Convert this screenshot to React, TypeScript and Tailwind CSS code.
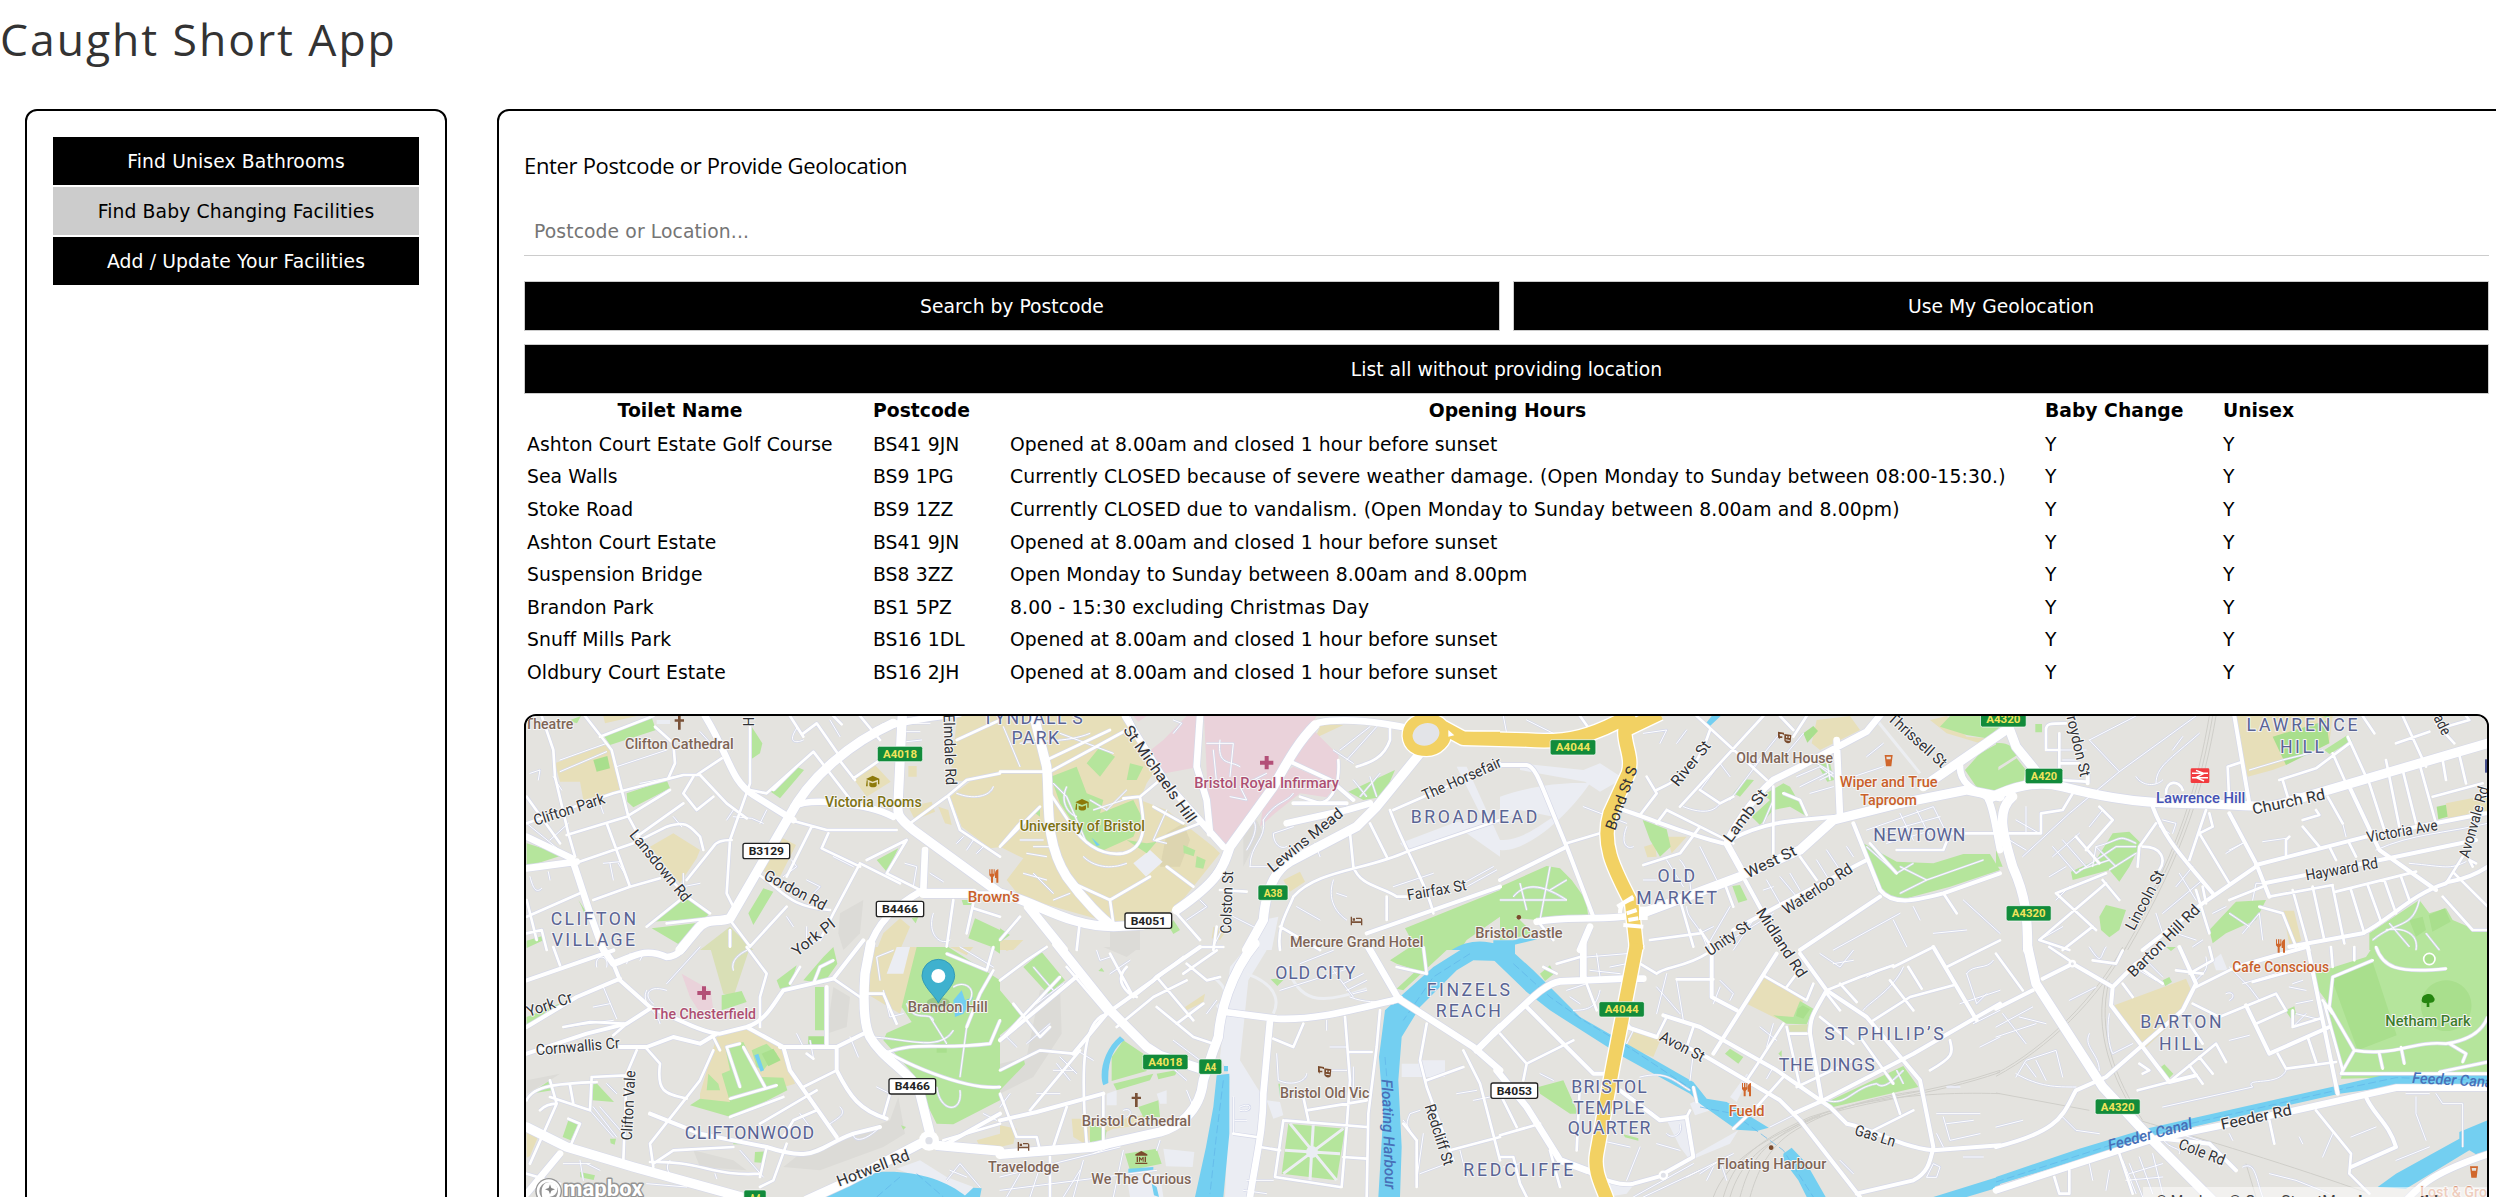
import React from "react";

type Tile = "A" | "B" | "C" | "D" | "E" | "F" | "G" | "H";
type Paths = Partial<Record<Tile, string>>;

// Map sections; geometry inside each is stored at three units per pixel.
const TILES: Record<Tile, [number, number]> = {
  A: [500, 700], B: [1000, 700], C: [1500, 700], D: [1996, 700],
  E: [500, 947], F: [1000, 947], G: [1500, 947], H: [1996, 947],
};
const KEYS = Object.keys(TILES) as Tile[];
const tf = (t: Tile) => `translate(${TILES[t][0]} ${TILES[t][1]}) scale(0.333333)`;

const FILLS: { c: string; p: Paths }[] = [
  { c: "#dcdbd7", p: {
    A: "M1020 640L1090 600 1080 700 1030 750 1015 700Z",
    B: "M730 400L770 360 790 400 750 460 730 500ZM330 690H420V750H330Z",
    E: "M1170 520L1195 450 1215 560 1150 600 960 670 850 660 900 620ZM580 610L700 640 740 670 600 660ZM1000 120L1050 150 1040 240 980 260ZM80 400L180 380 150 400 80 440Z",
    F: "M120 130L180 120 185 260 100 390 0 440V350L80 330ZM310 0H420L380 30Z",
  } },
  { c: "#e7dfb9", p: {
    A: "M165 190L320 130 330 150 368 270 250 300 240 245 180 245ZM310 48H410L315 70ZM450 440L520 400 600 450 590 475 540 550ZM840 410L888 435 840 530 780 510ZM1060 235L1125 195 1172 245 1100 290ZM1372 48H1510V440L1470 445 1385 380 1350 290 1410 245 1350 240ZM1225 198h25v32h-25zM1225 320l70-15 10 30-60 25zM1315 320l30 10 10 45-20-5zM1150 700L1200 655 1230 680 1200 750H1130Z",
    B: "M0 48H380L480 190 440 250 420 300 500 330 640 440 660 460 540 610 460 680 340 670 230 640 60 590 20 540 70 475 0 440ZM945 115L965 70 1030 75ZM850 540L900 515 915 545 870 575ZM640 680L680 690 660 720 635 715ZM0 720l70 0-30 30H0z",
    C: "M500 410h60l-45 50zM432 440L465 430 470 470 442 472ZM950 60L1050 48 1080 90 960 150 935 130ZM1290 60L1340 48 1400 110 1460 115 1440 130 1340 100Z",
    D: "M715 48H1010L1000 130 870 195 830 210 755 230ZM1350 310L1475 285V335L1355 355ZM862 632h32l22 90-35 20z",
    E: "M600 440L650 270 740 245 850 310 885 410 690 470 600 455ZM1110 0H1260L1200 200 1100 140ZM80 555l35 12-25 60-10 5zM1430 580L1500 560V600H1440zM1350 0h70l-20 25z",
    F: "M555 180L615 140 610 165 560 190ZM0 535L50 545 40 590 0 600ZM215 515H310L350 520 450 500 460 530 340 545 250 588 220 570ZM10 0h40l-30 12z",
    G: "M740 170L790 90 910 160 880 210 830 215ZM375 280L400 245 485 270 460 330 380 300Z",
    H: "M355 175L570 95 590 140 560 200 445 305Z",
  } },
  { c: "#ddd5b0", p: { B: "M500 400L550 370 570 420 540 500 480 500Z" } },
  { c: "#d9dfb6", p: {
    A: "M690 680L600 750H760Z", E: "M630 0H750L700 150 670 140Z", G: "M865 235L925 232 920 255 870 262Z",
  } },
  { c: "#ead2da", p: {
    B: "M400 48H440L415 65ZM490 120L560 48H600V200L495 220 440 160ZM612 48H950L870 180 720 420 670 435 628 380ZM870 180L945 95 1015 165 1020 255ZM780 380L800 250 880 200 1010 255 980 292 900 280 825 340Z",
    E: "M545 80L632 130 640 190 595 190 570 150Z",
  } },
  { c: "#ebedf3", p: {
    A: "M470 60h40v12h-40z",
    B: "M1200 430L1370 365 1450 360 1370 200 1400 200 1500 420V470L1400 400 1220 450ZM400 490l50-40 38 35-50 45zM790 660l45-10-20 100-50 0z",
    C: "M60 190L250 210 300 190 370 235 300 275 255 245 60 210ZM0 290C100 255 200 245 270 250 180 380 60 460 0 450V420C60 420 100 390 160 350L60 330 0 370Z",
    E: "M1190 0h40l-20 80-50 0zM1190 665L1260 640 1340 690 1420 720 1400 750Z",
    F: "M690 60L740 0 800 10 745 100 720 340 770 420 790 450 780 600 740 750H675L690 390 660 330ZM320 440l30-10v45h-30zM490 605l93 10-5 45-80-2zM470 440l30-10v40l-20 0zM800 460l40 5 10 40-30 10zM1205 350h50v40h-50zM1255 340h80v50h-80zM380 690l100-10 10 70H390z",
    G: "M500 520L560 515 582 625 715 550 690 590 570 640 540 600ZM690 450l50-70 10 5-40 80zM570 470l30-15 45 30-60 20zM300 700L400 715 380 740 320 750Z",
    H: "M650 40l25-20 20 50-35 0z",
  } },
  { c: "#b5e59c", p: {
    A: "M310 105L455 52 468 90 330 135ZM755 80L787 130 780 160 750 180ZM380 280L500 240 510 265 400 322 382 305ZM805 270L890 200 912 210 840 295ZM80 430L190 465 80 500ZM1130 480L1195 445 1160 515ZM455 665L550 590 625 640 620 655ZM455 685L610 667 540 735ZM745 640L790 565 820 575 760 675ZM1425 655L1500 690V750L1405 715ZM235 600l20 30 5 30-15-40zM1235 655l20-5-8 20zM80 722l47-14v14l-47 22zM205 62l38-14-12 22zM1385 600h30v15h-25z",
    B: "M152 230L230 200 260 280 310 300 300 340 400 300 425 350 400 410 300 455 260 430 180 310ZM300 140L345 170 300 230 260 190ZM390 190L430 200 410 240 380 240ZM1045 275L1185 210 1150 290 1090 300ZM1215 685L1500 570V650L1400 720 1380 750H1250ZM550 435l36 16-5 18-30-10zM590 468l27 12-7 26-24-4zM380 420L440 430 470 425 440 460ZM520 660l20 30-20 12-12-20zM0 685l30 20-30 22zM100 335l20-15v30z",
    C: "M0 560L140 498 180 505 215 540 258 600 265 650 110 660 0 650ZM0 640L60 660 100 700 40 715 0 720ZM428 360L500 388 512 440 480 470 450 420ZM700 280L735 238 762 240 720 290ZM755 350L810 300 790 285 850 250 870 260 922 350 870 320 820 330 780 375ZM950 190h40l12 50-20 5zM1320 80L1350 48H1500V80L1460 115 1400 105ZM1395 210L1440 160 1495 130V275L1430 262ZM1090 430L1190 485 1300 490 1390 462 1470 462 1500 510 1350 560 1200 600 1130 570ZM697 558L720 555 742 600 715 608Z",
    D: "M0 130C30 125 50 140 72 160L0 205ZM62 175L90 210 80 255 0 275V215ZM118 72h20v25h-20zM985 150L1055 105 1068 122 1000 162ZM225 515L300 480 350 400 400 395 435 430 400 500 370 545 340 510 230 540ZM310 650L330 615 390 630 370 690 340 712 315 690ZM640 690L720 605 810 600 780 660 690 700 650 730ZM1120 700L1180 660 1270 600 1300 640 1350 625 1370 660 1440 690 1475 690V750H1120ZM0 450l20 50H0zM980 48h20v10z",
    E: "M80 210L190 165 228 150C180 200 120 212 80 235ZM570 475L600 455 690 465 665 380 690 370 675 300 730 285 780 390 850 392 862 430 700 512ZM625 380l30 30 5 20-40 0zM755 310L800 290 830 320 790 370 770 360ZM665 145L725 132 740 165 665 190ZM830 100L890 55 870 120 840 125ZM910 100L970 30 1000 0 1012 50 970 110ZM945 120H975V250H945ZM1250 0H1345L1500 100V460L1360 532 1310 530 1270 450 1230 370 1150 280 1160 258 1235 225 1205 180 1225 100ZM1470 0h30v20zM280 398L342 465 278 460ZM90 440L150 400 157 430ZM188 570L205 520 235 530 212 580ZM765 615l35-2-5 35-32-2zM700 575l27 7v10h-27zM330 575h18l-4 18-12-4zM240 675l45 10-4 14-40-8zM1203 535l15 5-8 8z",
    F: "M70 60L125 15 195 100 145 142ZM0 130L67 210 0 265ZM370 280L430 320 440 372 335 402 335 330ZM340 410L460 380 450 400 350 430ZM470 380l65-12-10 17-50 12zM415 480L475 460 480 510 430 510ZM270 530L320 550 315 580 270 585ZM375 620l95-15 15 45-95 20zM0 370L70 330 75 352 0 430ZM865 530L1035 545 1010 700 845 680ZM1170 40L1230 0H1350L1210 130 1190 125 1250 70 1190 50ZM812 97l45-5-25 25zM295 72l10-10 8 12zM835 410l5 0v40z",
    G: "M120 80L150 55 162 80 135 102ZM115 420L190 400 235 500 210 500 120 440ZM675 320L690 305 730 330 715 350ZM820 205L880 210 900 162 940 185 920 232 860 230ZM970 470L1210 357 1255 420 990 482ZM370 562l45 12v7l-40-10zM835 320l10-10v20z",
    H: "M950 80L1110 30 1130 0H1475V385L1035 395 1040 370 990 160 960 120ZM500 100l20-10 8 15-20 12zM488 365L505 352 532 380 515 398ZM868 190l27-12 5 22-15 15zM510 0h30l-15 12z",
  } },
  { c: "#a9df8d", p: {
    A: "M280 180L322 168 330 205 290 215Z", C: "M910 100l30-22 14 15-32 35z",
    D: "M830 110L990 62 1000 130 870 195ZM1322 320l28-6 5 36-28 8zM1240 660l40-10 10 40-30 20zM1298 645l48-20 18 40-55 30z",
    E: "M785 320l35-15 22 35-37 18zM925 268h47v24h-47zM1310 300l30-8 0 25-30 0z",
    G: "M893 185l15-10 22 12-20 28-22-8z",
    H: "M1005 90L1130 45 1202 265 1085 310ZM1350 100a76 76 0 1 0 1 0z",
  } },
  { c: "#73cff1", p: {
    B: "M275 413l25 22-10 3zM1355 750C1400 720 1450 718 1500 735V750z",
    C: "M618 70L635 48H662L630 78ZM0 738L60 715 112 718 40 735 20 750H0Z",
    E: "M920 750C1000 710 1080 685 1140 675 1250 670 1340 700 1400 750ZM763 325L775 320 792 370 782 374ZM1360 160l25-30 10 30 25-10-30 50-25 10zM1390 750l30-28 25 2-5 26z",
    F: "M360 268C310 310 296 380 310 415L325 408C322 340 342 300 374 280ZM650 385L688 380 688 560 670 750H585L618 600 640 480ZM672 357h12v16h-12zM1440-10H1500V42L1420 40 1370 70 1260 180 1205 270 1195 400 1205 600 1200 750H1135L1150 500 1137 330 1155 190 1210 140 1300 60 1380 10ZM385 665l75-5v12l-75 8zM455 710l15 10 7 30-15-5z",
    G: "M-20-20H45V20L100 70 240 210 380 290 580 405 600 430 620 455 680 465 806 542 770 552 710 548 600 470 570 440 370 330 150 190 80 135-20 38ZM850 620L875 602 920 650 977 750H920L895 700 850 640ZM1300 750L1500 688V720L1400 750Z",
    H: "M0 690L250 605 450 545 1030 415 1200 376 1475 385V415L1250 410 1030 440 500 560 0 715ZM1145 720L1200 680 1390 575V555L1475 520V612L1440 622 1420 610 1230 725Z",
  } },
];

const RAIL: Paths = {
  D: "M660 48C625 250 570 450 395 750M650 48C615 250 560 450 385 750M640 48C605 250 550 450 405 690",
  G: "M1500 370C1300 440 1100 450 930 510 750 590 700 650 670 750M1500 376C1300 446 1100 458 940 515 780 590 720 650 690 750M1500 440C1200 430 950 480 850 560 760 620 740 680 720 750M1270 430C1100 450 960 500 870 560 800 610 770 680 750 750M960 505C800 570 680 640 640 750",
  H: "M380 0C300 150 150 300 0 380M390 0C310 155 155 305 0 388M330 100C290 250 350 400 430 520 600 570 900 660 1120 740M0 438L280 490M340 100C300 250 360 400 440 520M750 650L780 750",
};

const ROADS: { w: number; p: Paths }[] = [
  { w: 3, p: {
    A: "M180 180L320 130M350 200L500 150M180 215L320 155M90 220L120 210 115 240M160 230L185 270M310 490L360 485M330 490L340 540M355 490L380 530M520 350L545 380M550 520V560L600 550M700 350L755 355 790 370M800 330L780 370M875 480L890 500 850 530M1000 470L1060 500M920 540L960 560 940 580M860 650L880 680M920 680V730L960 720M1215 490L1250 500 1240 560M1290 520L1330 545M1300 640C1280 700 1320 740 1350 720M1370 430L1390 410M1400 450L1420 420M1430 460L1450 440M1370 280C1420 300 1470 290 1480 260M1220 70H1290M1220 95H1260M1220 125L1265 120M600 95L650 150M990 60L1020 110M90 530C100 570 110 580 125 565M145 515L150 540M420 250L550 225M680 360L700 330M890 85C860 130 890 130 910 120M300 310L310 340M80 370L190 460M205 370L150 420",
    B: "M10 80L60 200M160 250L200 290 260 430M200 260C180 300 200 340 230 350M270 300L320 330 380 270M280 330L400 290M390 50L410 90M60 130C100 120 200 130 270 100M180 100L340 160M60 420H130M100 440H160M80 460L140 470M250 470C280 500 330 510 380 490M70 520L140 540M100 520L160 580M160 600L210 580M500 330L460 420 500 430M620 130H700L690 230M640 150L650 250 700 260M660 120C650 200 690 180 720 200M690 290L740 300 720 260 800 220M750 500C750 430 800 420 790 360M790 360C830 300 860 310 880 280M750 500H820M880 380L820 400C820 430 840 450 860 440M1000 540C980 600 1010 640 1040 660M1010 580L1040 590M890 620L960 660M1130 80L1040 180M1110 80L1020 150M1000 150L1060 190M1060 240L1100 290M1110 230L1130 290M1140 220L1080 290M945 430L960 470M520 60L545 70 520 100M560 660L620 620 600 600M700 650L780 690M640 740L690 640M1390 550L1480 500M1400 560L1490 510M1180 560L1300 520M740 350C780 360 770 400 740 450",
    C: "M10 48L20 100M80 60L160 100H110M430 100L500 90 480 130M420 80L460 70M560 90L530 130M250 320L380 370M380 380C360 430 380 450 400 440M430 540L470 540M500 480L550 560M540 480C560 500 580 560 570 600M600 440L650 540M550 320C600 340 640 340 660 310M690 230L660 190 600 270M780 180L690 300M840 100L760 200M910 100L860 160M890 230L960 200 1000 230M900 260L980 220M930 280L1000 260M1100 170L1150 130M1060 230L1150 200M950 190L1000 220 960 240M980 180L990 240M1100 390L1300 320 1350 420M1140 400L1320 350M1200 340L1240 420M1250 330L1290 410M1160 430L1300 390M870 520L900 570M840 530L890 590M790 570L820 560M800 540L840 610M950 480L1000 560M980 450L1020 510M1040 440L1060 470M1100 440L1190 520 1240 490M1200 500L1280 540 1450 480M1280 540L1200 580M600 700L640 680M620 740L690 620M40 590C80 540 140 560 200 600M0 600H200M60 550L80 630M150 500L120 660M200 540L150 570M660 740L820 640M700 750L760 660M1000 750L1200 640M1240 620L1260 660M1180 660L1220 740M1300 700L1400 690M1390 600L1500 700M820 300L790 370M560 620C560 660 600 670 620 740",
    D: "M280 120L420 48M280 120L370 215 600 48M370 215L220 340 80 470M420 230C440 260 480 260 500 240M480 250C480 200 520 180 610 100M530 150L560 110M190 150L270 150M200 180H240M130 720L200 680M180 600L220 560M170 440L240 520M200 420L270 500M170 470L250 400M280 380L320 330M300 440C380 420 360 400 420 430M240 520L360 440 420 440M290 500L300 440 360 500M340 510L420 460M250 510L340 480M160 530L210 500M500 360L540 370 530 400M490 380L520 400M550 520L600 600M540 560L590 500M500 640L620 540M650 640L690 620M700 450L740 430M690 460L740 430M800 425L870 415M770 600L780 550H810M900 280L970 290M760 210L860 180 980 150M1040 370L1050 410M1140 450C1250 400 1350 400 1475 370M1240 490C1350 500 1360 510 1410 485M480 640L500 700M540 700L600 720M90 320V400M40 420L90 450M60 360L130 400M1130 720C1200 660 1250 690 1270 600M1170 690C1220 680 1270 700 1260 750M1180 670L1240 740M1290 700L1330 750M740 700L790 640 800 720M700 640L760 680M590 740L620 720",
    E: "M380 50L390 20M420 40L430 20M290 60C280 20 330 20 320 60M440 130C420 170 470 190 480 230M500 130C440 110 430 150 460 170M310 120L350 215M280 180L330 170M190 240L340 220M600 0L500 110M890 260L910 300M930 280L940 330M1050 270L1075 330M1020 480C1040 500 1020 510 990 530M700 70C690 40 720 20 740 10M1130 420L1170 440M280 480L350 570M300 480L370 560M320 410L350 440M270 490L340 570M190 650L270 650M240 640L250 700M260 650L300 670M645 680L650 695M510 640C480 680 540 700 560 700M720 610L790 690M1060 560C1060 590 1100 580 1140 540M1140 100L1130 30 1180 10M1150 130L1170 210 1210 200M1220 170C1240 230 1290 190 1300 220M1360 120C1390 100 1430 120 1410 160M1450 500L1490 520M1340 700L1380 650 1440 720M1350 670L1400 690M440 710L560 720M900 500L930 540M1380 0L1480 60M1110 270C1200 270 1320 320 1360 250M1290 210L1340 290M1310 420C1320 500 1390 500 1380 430M1400 240L1380 390",
    F: "M290 10L300 40 330 30M330 80L390 40M190 110L110 170M20 270L50 300M150 230L80 290M160 370H220M170 350L210 400M180 330L230 380M230 310L280 340M100 60L160 130M650 160L620 200M900 50L1000 10M840 130L1060 60M1040 130L1100 100M1060 140L1100 130M1030 110L1090 80M1000 70L1060 150M980 220V250M990 300H1040M830 320L835 400C880 420 920 400 920 380M720 480C760 460 760 500 720 490M705 520H740M700 450V560M990 370H1040M1060 360V450M1210 520C1260 580 1200 560 1230 500L1260 490M1370 440L1430 430M1270 560L1250 700M1260 680L1340 650M0 690L360 600M0 730L470 670M20 750L60 680M90 750L120 660M190 750L240 670M280 620L330 600M370 610L340 750M250 640L220 750M480 330L560 400M520 280L600 340M560 430L580 480M370 490C390 480 400 500 380 510M0 480L30 440M110 440H180M480 580L470 610M740 700H820M730 730L800 740M1380 610L1400 690M1420 460L1470 450M1050 150C1100 170 1120 160 1180 170",
    G: "M260 30L380 20M270 70L360 80M290 20L300 90M330 60L380 50M200 130L260 110M210 150L240 170M220 190C280 190 290 170 300 130M470 120L540 200M470 200L500 80M530 100L550 220M580 320L570 400M400 250L380 290M660 100L700 140 690 160M660 120L640 170M1000 50L1060 40M960 20L1020 60 1060 10M1100 90L1160 60M1400 80L1430 170 1460 140M1400 80C1420 50 1460 70 1480 40M1380 170L1500 130M1440 300L1500 270M1420 230L1500 190M1340 420H1380M1310 500L1440 500M1330 510L1350 580 1440 560M1340 530L1420 520M1310 560L1330 600M1390 630H1450M1280 690L1300 650 1320 660 1310 690ZM1020 640L1060 680M420 390C500 370 520 400 570 430M460 500L380 440M600 680L660 640 680 700M620 700L640 660M560 690L700 620M400 750L580 650M430 750L600 670M470 590L540 610M300 580L390 600M420 600L380 700M500 560C520 580 550 560 540 530M10 660L60 650M930 480L810 540M800 395L820 360M160 400L120 380M780 240L830 280M820 230L800 300M980 460C1040 480 1060 420 1130 410C1150 430 1180 400 1210 370M1190 370L1210 410M1210 60C1180 130 1100 170 1090 190",
    H: "M220 160L300 120M70 210L150 230M0 240L110 180M0 270L120 230M20 200L90 290M60 390L90 340 180 310 200 390M90 350L120 390M120 340L150 400M60 380C130 420 180 420 240 420M280 260C260 300 310 320 310 370M340 200C330 250 340 300 350 320L410 290M430 70L480 100M460 50L500 90M280 0C320 60 310 30 330 0M630 30C640 70 620 80 600 100M700 60L760 120 790 160M740 110L840 80M690 140C710 130 720 150 700 160M890 110L920 100M880 120L930 130M900 170L950 160M900 200L980 220M930 200L890 240M700 280L760 265M500 480L770 420C740 390 850 420 870 370M500 575C520 610 560 600 550 620M910 570L920 590M980 630L1010 560M1065 570L1140 540M1230 440L1300 440M1260 450V500L1290 580M1320 440L1340 470H1400V600M1200 640L1300 600M0 540L80 520M200 510L240 550 310 560M380 640L420 740M400 650L440 750M430 630L470 740M470 620L500 740M400 680L500 650M390 700L500 690M280 650L290 700M660 620L670 660M700 560L710 580M740 660C780 640 780 700 800 750M820 680L900 700 1000 740M330 730L340 670M550 560L640 590",
  } },
  { w: 8, p: {
    A: "M125 48L160 150 165 230 205 400 225 470M255 48L335 150 385 350 450 470M80 370L340 280 550 225 600 225 680 310 740 355M300 110L460 48M465 80L520 130 525 190 505 235M590 225L665 175M580 230L550 280 590 330 640 290M200 405L380 350 510 270M225 490L400 430 500 380C560 360 570 380 600 410L610 450M320 370L390 560M280 600L390 560 480 535M450 470L560 590 630 640M410 410L550 310M560 540L640 440C650 420 680 420 695 420M750 80L750 250 690 420 680 580 700 620M750 270L800 280 940 155 1060 310 1150 330M820 270L890 200M1060 235L1140 180M1010 170L1065 240M1080 48L1140 120M870 360L980 390H1190M985 400L965 445 1080 500M935 380L860 530M1080 490L1000 640 960 720M1100 480L1220 420 1160 520 1260 570M1080 490L1200 550M770 520C850 570 860 620 990 630M860 620L750 740 690 660M870 48L910 110M910 100L950 70 1020 170M500 670L630 655M440 680L540 600M80 290L180 430M80 650L240 580M80 600L110 720M1230 370L1340 290 1400 240 1500 220M1345 290L1380 390 1500 470M1360 600L1340 740M1420 610L1400 700M1420 625L1500 650M690 690V740M1370 120L1500 60M80 700L125 690 140 750M1000 48l25 25",
    B: "M1060 500L1050 400M1170 330C1200 420 1280 550 1300 640M1180 330L1500 190M1060 500C1080 560 1150 560 1190 590L1220 590M1110 370L1160 470M1015 180C1020 250 1000 300 960 310L900 290M150 215H0M150 215L270 150 380 90M140 180L330 90M150 280L210 370C250 430 300 470 370 460 450 440 430 350 420 290L370 295M420 290L480 240M460 320L550 370M0 440L120 320M220 550L330 600 450 530M330 600L340 670M470 420L600 370M500 500L580 560M670 480L600 580M650 680L640 750M1170 80V120C1150 180 1100 190 1070 200M1160 590L1160 660M0 440L60 370M840 680L960 750M530 640L600 720M240 660L230 750M880 590C950 510 1100 510 1220 455L1500 360M880 590C860 640 830 680 840 750M60 650L0 720M660 570L740 575",
    C: "M590 48L800 240M790 48L540 320M630 90C600 180 580 220 470 270M440 230L470 280 420 345M500 330L600 380 700 430M500 330L470 370M600 380L540 460 430 495M820 260L820 460M900 470L950 540M840 48L880 90M920 48L880 110M670 540L700 620M540 600L580 740M1190 450H1330L1350 400H1500M1110 430L1190 520M850 280L900 300 920 345M600 270L660 310 700 290M240 48L270 90M1330 580L1370 640M200 430L300 400M110 660L160 720M600 690L640 750M450 720L600 700",
    D: "M740 185L695 200 700 310M630 330L580 480M610 400L700 550M610 400L650 380 640 340M1010 555L820 590M1020 575L1260 515M1120 250L1165 390M1170 180L1210 380M1220 210L1260 370M1270 190L1320 370M1220 48L1290 200M1340 180L1350 240M1390 165L1410 250M1310 290L1460 250M995 290L1040 370M890 570L940 750M950 560L985 720M1010 560L1045 730M1065 570L1105 700M1115 555L1155 665M1165 540L1200 640M1215 530L1240 600M1350 550L1400 470M1375 520L1475 620M1340 590L1430 690H1475M850 240L960 205 1060 130M1010 160L1050 250M1055 110L1110 230M860 240L875 290M960 330L970 345 920 360M920 380L970 440M1000 440L1020 480M1060 430L1080 470M150 150V90C150 70 160 70 210 70M150 150H190M190 100V240L270 245M195 190H250M40 400H135V340L200 330 230 280M310 320L350 360 270 450M240 410L310 490M180 580L330 520M180 580L300 690M330 550L130 720 220 750M320 540L370 600M480 370L430 440 425 500M440 440C500 440 510 480 490 510M510 280c0-40 40-40 50-10M600 570L640 700M800 560L700 600M880 690L860 640 790 620M1320 70L1375 130M1100 48L1135 100M1200 130L1300 95M1350 80L1420 60 1410 48M1430 500L1420 480 1440 490M870 465V420L880 410M290 680L200 750M620 560L630 610M860 640L900 740",
    E: "M190 240L270 225 370 230M340 265L380 230M440 305L480 350C470 430 490 440 560 455M410 310L380 380 370 640M640 310L600 400 450 590 460 660M460 650L520 610 700 600M450 645C600 640 640 690 780 680M780 530L950 430M860 590L820 700 780 720M910 420L1010 370M740 0L800 80 780 150V240M80 460C100 410 200 410 290 405M275 390L270 490 150 450M275 390L380 385M150 400L170 470 90 650M210 415L220 470M120 490C130 480 150 470 170 470M205 515L240 530 210 600 160 590M640 270L660 310M720 290L680 300 720 420M730 300L795 420M690 455L830 415M690 510L850 450M850 570L880 520 950 490M800 600L780 690M1150 510L1170 440M1110 280C1200 350 1400 430 1500 420M1150 320C1250 280 1300 310 1470 290L1500 220M1330 580L1500 530M1100 140H1150L1190 230M1000 95L1080 150M80 680L180 710M160 0L180 55M1340 20L1460 70 1480 0M1480 70L1440 140 1400 240M920 320L940 335M940 110L960 60 1000 40M900 60L870 110",
    F: "M310 440V590M260 590C240 350 250 220 320 200L200 60M0 370L120 310 220 320M0 100L80 40 140 0M40 170L120 270 150 240M470 90L580 220M550 80L650 10M470 180L580 270 640 290M400 150L550 30M560 50L620 100 660 90M380 60C340 100 380 140 410 150M350 240L460 150 560 100M530 230L610 170M1140 190L1130 300 1105 500 1100 750M1035 210L1050 400 1040 540 1025 720M1045 315H1115M920 490L1100 460M910 450L925 520M820 275L880 300 910 230M850 520L1100 540M850 520L825 690 1020 720M780 600L840 610M1030 630L1100 635M1280 230L1260 340 1280 420 1360 640M1280 400L1390 360M1390 310L1440 410 1500 640M1350 610L1500 570M1250 580V720M1210 530 1250 580M700 560L770 570M150 750V630M160 600L200 480M0 440L50 570 110 570 120 610M330 20L400 150M90 490L240 310M180 90L0 280M1190 60L1280 80 1270 0M600 0L670 0",
    G: "M530 97H640M470 80C490 60 560 60 620 20M420 50l50 30M560 300L580 240M980 130L1080 90 1180 55M790 85L920 160 940 110M860 120L890 80M1020 110L1070 165M1225 60L1265 125M1340 60L1500-20M1120 220L1230 150 1360 115M1170 100L1240 190M1350 280C1360 320 1360 330 1290 370M1120 550L1240 490M1180 440L1200 500M1080 270L1180 410M870 260H920M860 240L900 420M890 420L1060 340M0 260L80 350 70 400M80 350L220 280M0 440L50 540M0 565L120 530M240 400L230 610M580 420L590 465M700 545L770 480 850 390M850 230L780 340 740 400M960 210L1060 290M0 630H40L60 710 80 750M150 610L180 720M1180 60L1300 0M980 140L1020 190M170 50L240 30M260 110L290 190M130 60L170 80M570 490L560 510M1210 640M470 270L500 210M390 240L360 200",
    H: "M0 20L80 130M600 120L720 60M590 170L670 210 840 140 870 190 780 230M845 320L870 365 1020 345M935 270L960 345M520 405L660 290 690 345M580 355L620 410M610 330L650 380M425 430L520 405M820 520L835 590M960 490L1065 620 1060 680 1120 740M370 620L410 740M175 690L190 740H220V670M430 350L460 370 440 380M380 110L410 150M430 60L500 110M890 240L970 215M890 190V240M580 230L620 290M1130 40L1010 90 1000 180 1075 310C1200 330 1250 280 1350 290 1420 280 1460 250 1475 210M1140 0C1160 60 1200 80 1350 65M1075 310L1035 380H1475M1360 290L1410 320 1400 345M1150 320L1160 365M1215 300L1225 350M1475 345L1330 375M980 160L1010 200M985 170L1040 370M770 105L930 60M1075 0V40M1005 0L1010 60M160 0L220 40M540 70L620 80M580 80L650 40 640 0M290 40L360 50 380 10",
  } },
  { w: 12, p: {
    A: "M1420 580H1500", B: "M1100 700L1500 560M860 180L990 240 1060 300M880 310L1040 310",
    C: "M0 540L200 440M0 195H80C110 200 120 250 200 440L280 650M670 430C550 400 490 370 370 330M690 420C800 360 900 360 1010 350M735 540L850 750M700 690L830 620 1100 480M1060 370L1140 570C1180 620 1250 600 1330 580L1500 520M1140 590L900 750",
    D: "M715 48L760 310M470 320C500 400 540 450 600 520L650 580M700 340L780 490 820 590M780 495L1110 410 1470 340M780 500L620 610 440 750M805 550L1200 470 1440 420M1060 260L1150 450 1320 570M1475 500C1400 550 1350 540 1350 550 1250 580 1180 660 1100 700L880 740M275 250V220",
    E: "M340 50L360 100 450 180C560 230 620 260 660 260L740 240 850 300 870 370 1010 570M80 320L260 260 380 230 450 185M80 240L230 150 360 95M80 100L340 10M350 300L440 300 520 270 600 290 650 260M450 500L600 560 800 600C950 650 950 600 1060 560L1140 540M1010 300V370C1050 450 1080 490 1160 515M840 300H1010L1090 260M980 120V300M1090-20L1000 95 850 130C820 170 800 220 740 240M1340 590L1500 500",
    F: "M0 520L110 495 310 440M0 280L240 80M220 320L320 200 460 100 470 90 600 0",
    G: "M635 0V150L710 190M830 20L640 320M380 240L470 270M490 205L600 240 830 370 990 480 1040 530M560 300L620 330 840 460 900 520 1080 750M900 20L980 130 1100 210 1260 400 1300 600C1290 650 1280 680 1240 700L1070 740M980 130C940 200 930 210 930 260L965 460M1300 0L1430 220M1500 170L1240 320 970 460 880 500M1040 530C1100 540 1200 600 1300 610L1500 595M80 180L280 380H310M360 430L480 520 560 510 580 630 490 680M230 660C300 690 350 720 400 710L490 685",
    H: "M0 185L110 130M140 95L230 50 350 120 345 175 520 405 600 385M350 120L420 50 500 0M550 0L600 110 560 190 330 390 240 430C200 500 200 550 0 600M750 175L820 320 1000 240M935 0L1025 440M1110 450C1130 500 1180 530 1200 600L1065 660M500 575L640 590 720 670M930 0L720 60",
  } },
  { w: 20, p: {
    A: "M615 48C690 170 690 240 760 285L880 360M880 320C930 290 1100 310 1180 350M1275 450L1270 570C1180 620 1130 670 1105 750M80 410L215 475C240 540 260 620 310 750M80 505L230 485M1150 80C1300 45 1350 48 1380 40",
    B: "M375 48L500 250 670 440M600 48L590 200 620 300 630 400M955 68C1040 50 1150 70 1230 85M860 370L1040 330 1110 310",
    C: "M110 665C200 650 250 660 370 650M270 680L240 750M730 520L680 430C690 400 750 300 820 240L900 200 1100 95 1145 40M1010 120L1020 350M1380 200C1380 250 1420 270 1460 290 1480 320 1485 380 1500 450",
    E: "M305 0L340 50C400 30 430 0 500 30 540 30 560-10 580-40M80 740L180 620",
    F: "M675 195L830 215C950 220 1050 190 1200 155M810 220L790 440C790 550 770 620 750 750M1430 310L1500 240M1105 0L1195 155 1420 300 1500 370",
    G: "M-20 260C80 170 130 110 180 103L370 95 430 95M250-10V100M-10 370L80 480 180 640 260 670",
    H: "M0 730L460 580 900 490 1200 422H1480M1230 760C1270 720 1300 680 1480 620",
  } },
  { w: 28, p: {
    A: "M1180 70C1050 130 930 230 870 345L690 655C650 670 620 650 590 690L540 750M1207 40L1195 290C1195 340 1180 340 1240 390L1500 580M1270 580H1420",
    B: "M100 40L140 200C150 300 130 420 200 530 250 600 310 660 340 680L430 675M0 580C100 600 200 680 340 680M85 620L190 750M945 75C900 120 870 170 820 260L690 440C670 500 660 540 530 630M1260 160L1130 320 1070 380 870 485C810 520 795 600 790 660L740 750",
    C: "M440 635L720 530M740 520L900 450 1000 360 1200 310 1400 270 1500 290M1270 260L1510 95",
    D: "M-20 295C50 260 120 240 200 260S400 310 560 310 800 330 860 310L1475 130M30 60L60 140 150 250M50 290C0 330 20 400 50 500 90 590 95 650 95 750",
    E: "M1112-10L1095 80C1090 150 1090 230 1110 270 1150 340 1240 380 1260 440L1290 560M920 760L1040 705 1260 590M1310 595L1500 612M80 540L200 600 400 660 760 760",
    F: "M170-10L330 190 440 300 480 325 600 365M765-10C690 80 660 200 655 270L640 310 610 400C600 500 530 540 480 555L280 600 0 622",
    H: "M95 0L120 110 320 420 460 570 650 760",
  } },
];

const YELLOW: Paths = {
  B: "M1280 62C1240 62 1228 85 1228 108 1230 135 1250 148 1280 148 1310 148 1338 120 1332 95 1325 70 1310 62 1280 62M1325 80L1390 115H1500",
  C: "M-110 115L80 120C200 130 280 110 400 40M480 40L375 90C370 130 400 170 385 220L330 340C300 440 350 520 395 610L410 750",
  G: "M410-10L340 350 290 620C280 680 310 720 325 770",
};

type Label = [Tile, number, number, number, string, string, number?];
const BROWN = "#7f6556", ROAD = "#303135", HOOD = "#5a6494", FOOD = "#c9602a", ROSE = "#ad4f72", EDU = "#7d7212", WTR = "#4870b8";
// tile, centre x, centre y, text length, text, colour, rotation
const LABELS: Label[] = [
  ["A", 147, 70, 146, "Theatre", BROWN], ["A", 538, 131, 326, "Clifton Cathedral", BROWN], ["A", 1120, 306, 290, "Victoria Rooms", EDU],
  ["A", 207, 328, 222, "Clifton Park", ROAD, -18], ["A", 481, 497, 262, "Lansdown Rd", ROAD, 51], ["A", 886, 570, 205, "Gordon Rd", ROAD, 28],
  ["A", 1350, 149, 212, "Elmdale Rd", ROAD, 88], ["A", 744, 65, 28, "H", ROAD, 90], ["A", 1481, 589, 156, "Brown's", FOOD],
  ["A", 940, 712, 150, "York Pl", ROAD, -38],
  ["B", 247, 376, 376, "University of Bristol", EDU], ["B", 800, 249, 434, "Bristol Royal Infirmary", ROSE],
  ["B", 480, 222, 345, "St Michaels Hill", ROAD, 55], ["B", 915, 420, 275, "Lewins Mead", ROAD, -39], ["B", 680, 607, 188, "Colston St", ROAD, -88],
  ["B", 1385, 236, 255, "The Horsefair", ROAD, -24], ["B", 1310, 570, 180, "Fairfax St", ROAD, -10], ["B", 1070, 726, 400, "Mercure Grand Hotel", BROWN],
  ["B", 1557, 697, 262, "Bristol Castle", BROWN],
  ["C", 364, 294, 200, "Bond St S", ROAD, -70], ["C", 572, 190, 160, "River St", ROAD, -51], ["C", 735, 347, 185, "Lamb St", ROAD, -53],
  ["C", 854, 173, 290, "Old Malt House", BROWN], ["C", 1166, 244, 294, "Wiper and True", FOOD], ["C", 1166, 298, 170, "Taproom", FOOD],
  ["C", 1253, 120, 220, "Thrissell St", ROAD, 42], ["C", 811, 485, 165, "West St", ROAD, -26], ["C", 952, 566, 240, "Waterloo Rd", ROAD, -33],
  ["C", 683, 714, 150, "Unity St", ROAD, -34], ["C", 845, 728, 238, "Midland Rd", ROAD, 57],
  ["D", 248, 138, 186, "roydon St", ROAD, 77], ["D", 614, 292, 268, "Lawrence Hill", "#4350b4"], ["D", 878, 305, 222, "Church Rd", ROAD, -12],
  ["D", 1218, 393, 216, "Victoria Ave", ROAD, -10], ["D", 1037, 507, 220, "Hayward Rd", ROAD, -10], ["D", 1433, 366, 220, "Avonvale Rd", ROAD, -74],
  ["D", 446, 600, 195, "Lincoln St", ROAD, -62], ["D", 503, 722, 285, "Barton Hill Rd", ROAD, -45], ["D", 1340, 74, 62, "ade", ROAD, 64],
  ["E", 612, 199, 312, "The Chesterfield", ROSE], ["E", 1343, 178, 240, "Brandon Hill", BROWN], ["E", 148, 172, 142, "York Cr", ROAD, -19],
  ["E", 233, 298, 252, "Cornwallis Cr", ROAD, -5], ["E", 385, 475, 210, "Clifton Vale", ROAD, -87], ["E", 1119, 663, 230, "Hotwell Rd", ROAD, -21],
  ["E", 1571, 660, 214, "Travelodge", BROWN],
  ["F", 409, 520, 328, "Bristol Cathedral", BROWN], ["F", 424, 694, 300, "We The Curious", BROWN], ["F", 974, 437, 268, "Bristol Old Vic", BROWN],
  ["F", 1166, 562, 330, "Floating Harbour", WTR, 88], ["F", 1318, 563, 190, "Redcliff St", ROAD, 72],
  ["G", 740, 490, 108, "Fueld", FOOD], ["G", 815, 649, 328, "Floating Harbour", BROWN], ["G", 547, 298, 145, "Avon St", ROAD, 27],
  ["G", 1126, 566, 125, "Gas Ln", ROAD, 17],
  ["H", 854, 60, 290, "Cafe Conscious", FOOD], ["H", 1296, 221, 256, "Netham Park", "#3f7d2c"], ["H", 1375, 399, 252, "Feeder Canal", WTR, 3],
  ["H", 462, 562, 260, "Feeder Canal", WTR, -15], ["H", 780, 510, 216, "Feeder Rd", ROAD, -12], ["H", 618, 615, 145, "Cole Rd", ROAD, 21],
  ["H", 1373, 735, 200, "Lost & Gro", "#dc9a7c"],
];

const HOODS: [Tile, number, number, number, string][] = [
  ["A", 280, 657, 256, "CLIFTON"], ["A", 280, 721, 250, "VILLAGE"], ["B", 98, 55, 300, "TYNDALL'S"], ["B", 106, 114, 143, "PARK"],
  ["B", 1422, 350, 380, "BROADMEAD"], ["C", 529, 528, 113, "OLD"], ["C", 530, 594, 242, "MARKET"], ["C", 1258, 404, 276, "NEWTOWN"],
  ["D", 918, 75, 333, "LAWRENCE"], ["D", 918, 140, 132, "HILL"], ["E", 748, 558, 388, "CLIFTONWOOD"], ["F", 946, 78, 240, "OLD CITY"],
  ["F", 1405, 128, 250, "FINZELS"], ["F", 1405, 192, 195, "REACH"], ["F", 1555, 668, 330, "REDCLIFFE"], ["G", 327, 420, 226, "BRISTOL"],
  ["G", 327, 482, 214, "TEMPLE"], ["G", 327, 544, 248, "QUARTER"], ["G", 1152, 260, 358, "ST PHILIP’S"], ["G", 980, 353, 288, "THE DINGS"],
  ["H", 555, 224, 244, "BARTON"], ["H", 555, 290, 132, "HILL"],
];

const SHIELDS: [Tile, number, number, number, string][] = [
  ["A", 1200, 162, 136, "A4018"], ["A", 799, 453, 140, "B3129"], ["A", 1200, 627, 142, "B4466"], ["B", 445, 662, 140, "B4051"],
  ["B", 819, 578, 90, "A38"], ["C", 219, 142, 137, "A4044"], ["C", 1510, 58, 137, "A4320"], ["D", 144, 228, 113, "A420"],
  ["D", 98, 640, 135, "A4320"], ["E", 1237, 418, 140, "B4466"], ["E", 765, 752, 67, "A4"], ["F", 496, 345, 136, "A4018"],
  ["F", 631, 359, 69, "A4"], ["G", 365, 187, 136, "A4044"], ["G", 43, 431, 140, "B4053"], ["H", 365, 479, 135, "A4320"],
];

const ICON: Record<string, { d: string; c: string }> = {
  church: { d: "M-4-21H4V-10H14V-3H4V21H-4V-3H-14V-10H-4Z", c: "#7a5238" },
  cross: { d: "M-6-20H6V-6H20V6H6V20H-6V6H-20V-6H-6Z", c: "#b34f77" },
  cap: { d: "M0-18L20-9V8H16V-6L0 0-20-8ZM-10 2L0 5 12 1V12C8 18-6 18-10 12ZM-18-4h3v18h-5z", c: "#8d7a0a" },
  food: { d: "M-14-20h3v13h3v-13h4v13h3v-13h3v18l-5 6V20h-6V4l-5-6ZM13-20V20H7V6H3V-8C4-16 9-20 13-20Z", c: "#d0662b" },
  cup: { d: "M-12-17H12L8 17H-8ZM-7-12L-6-4H6L7-12Z", c: "#d0662b" },
  mask: { d: "M-20-17L-2-14V-8H-6V-10H-15L-14-3H-7V2H-15V6L-20 0ZM-1-10L20-7 18 14C12 20 3 18-1 10ZM4-4V1H8V-4ZM12-3V2H16V-3ZM3 6L15 8V11L3 9Z", c: "#7a4b2c" },
  bed: { d: "M-17-13h4V1H14V-6H-1V-10H12C16-10 18-7 18-4V13H14V6H-13V13H-17ZM-11-8h7v7h-7z", c: "#7a5238" },
  dot: { d: "M0-7A7 7 0 1 1-1-7Z", c: "#7a4b2c" },
  museum: { d: "M0-20L18-10V-6H-18V-10ZM-14-3H-10V13H-14ZM10-3H14V13H10ZM-18 15H18V19H-18ZM-7 12V-2H-4L0 4 4-2H7V12H4V4L0 9-4 4V12Z", c: "#7a4b2c" },
  tree: { d: "M-4 20V8C-14 10-22 4-18-4-18-12-10-16-4-18 6-22 16-16 17-9 24-2 18 10 4 7V20Z", c: "#25850f" },
};
const POIS: [Tile, number, number, string][] = [
  ["A", 538, 68, "church"], ["A", 1118, 245, "cap"], ["A", 1482, 528, "food"], ["B", 246, 315, "cap"], ["B", 800, 188, "cross"],
  ["B", 1069, 663, "bed"], ["C", 57, 652, "dot"], ["C", 854, 112, "mask"], ["C", 1166, 182, "cup"], ["D", 854, 738, "food"],
  ["E", 612, 138, "cross"], ["F", 409, 459, "church"], ["F", 70, 598, "bed"], ["F", 424, 632, "museum"], ["F", 974, 374, "mask"],
  ["G", 740, 428, "food"], ["G", 814, 602, "dot"], ["H", 1296, 160, "tree"], ["H", 1434, 675, "cup"],
];

function Layer({ paths, ...rest }: { paths: Paths } & Omit<React.SVGProps<SVGGElement>, "paths">) {
  return (
    <g {...rest}>
      {KEYS.map((t) => paths[t] && <path key={t} d={paths[t]} transform={tf(t)} />)}
    </g>
  );
}

function BristolMap() {
  return (
    <svg className="block h-[483px] w-full bg-[#e4e3df] font-['Roboto',sans-serif]" viewBox="526 716 1961 483" preserveAspectRatio="xMinYMin slice" strokeLinejoin="round">
      {FILLS.map((f) => <Layer key={f.c} paths={f.p} fill={f.c} />)}
      <Layer paths={{ F: "M740 80C850 120 830 180 820 200M860 60C900 160 950 180 1100 125M640 90C680 120 690 150 650 180M870 530L1010 700M1030 545L850 680M940 530L930 700M855 610L1020 620", C: "M1130 60L1260 220" }} fill="none" stroke="#eceef2" strokeWidth={9} />
      <Layer paths={RAIL} fill="none" stroke="#cfcec9" strokeWidth={3} />
      <Layer paths={{ E: "M1130 750L1200 690M1250 680L1330 750", F: "M670 400L650 560 630 740M1410 20L1300 90 1210 220M1155 330L1170 500", G: "M40 50L150 150 250 220 400 310 580 430M600 480L700 500 850 610 940 750", H: "M0 705L450 560 1030 428 1200 392 1475 400" }} fill="none" stroke="#5fb3e8" strokeWidth={2} strokeDasharray="24 10" />
      {ROADS.map((r) => <Layer key={r.w} paths={r.p} fill="none" stroke={r.w === 3 ? "#d4d8ea" : "#d6d9e9"} strokeWidth={r.w + 4} />)}
      {ROADS.map((r) => <Layer key={r.w} paths={r.p} fill="none" stroke="#fff" strokeLinecap="round" strokeWidth={r.w} />)}
      <Layer paths={YELLOW} fill="none" stroke="#fff" strokeWidth={48} />
      <Layer paths={YELLOW} fill="none" stroke="#f2d163" strokeWidth={40} />
      <g transform={tf("B")}>
        <ellipse cx="1278" cy="103" rx="41" ry="33" fill="#e3e4e8" transform="rotate(-20 1278 103)" />
        <path d="M1345 90l18 16-18 4z" fill="#fff" />
      </g>
      <g transform={tf("C")} fill="none" stroke="#fff">
        <path d="M352 620L400 590M370 675L430 680M360 640C360 610 375 605 400 595M380 640L410 630M385 660L415 655" strokeWidth="12" />
        <path d="M430 620V660" strokeWidth="26" />
      </g>
      <g transform={tf("E")}><circle cx="1287" cy="581" r="30" fill="#fff" /><circle cx="1287" cy="581" r="11" fill="#dfe1e8" /></g>
      <g transform={tf("F")}><circle cx="936" cy="615" r="18" fill="#ebedf3" /></g>
      <g transform={tf("G")}><circle cx="490" cy="685" r="11" fill="#dfe1e8" stroke="#fff" strokeWidth="7" /></g>
      <g transform={tf("H")} stroke="#fff"><circle cx="229" cy="50" r="8" fill="#dfe1e8" strokeWidth="7" /><circle cx="1300" cy="36" r="17" fill="#a9df8d" strokeWidth="5" /></g>

      {HOODS.map(([t, x, y, len, s], i) => (
        <g key={i} transform={tf(t)}>
          <text x={x} y={y + 18} textAnchor="middle" textLength={len} lengthAdjust="spacing" fontSize="53" fill={HOOD} stroke="#f4f4f6" strokeWidth="6" className="[paint-order:stroke]">{s}</text>
        </g>
      ))}
      {LABELS.map(([t, x, y, len, s, c, rot = 0], i) => (
        <g key={i} transform={tf(t)}>
          <text transform={`rotate(${rot} ${x} ${y})`} x={x} y={y + 16} textAnchor="middle" textLength={len} lengthAdjust="spacingAndGlyphs" fontSize="46" fontWeight={c === ROAD ? 400 : 500} fontStyle={c === WTR ? "italic" : "normal"} fill={c} stroke={c === WTR ? "none" : "#f6f6f6"} strokeWidth={s === "Bond St S" ? 0 : 6} className="[paint-order:stroke]">{s}</text>
        </g>
      ))}
      {SHIELDS.map(([t, x, y, w, s], i) => {
        const green = s[0] === "A";
        return (
          <g key={i} transform={tf(t)}>
            <rect x={x - w / 2} y={y - 23} width={w} height="46" rx="6" fill={green ? "#128b3b" : "#fff"} stroke={green ? "#fff" : "#222"} strokeWidth={green ? 2 : 4} />
            <text x={x} y={y + 12} textAnchor="middle" textLength={w - 34} lengthAdjust="spacingAndGlyphs" fontSize="35" fontWeight="700" fill={green ? "#f1e45b" : "#222"}>{s}</text>
          </g>
        );
      })}
      {POIS.map(([t, x, y, k], i) => (
        <g key={i} transform={tf(t)}>
          <path d={ICON[k].d} transform={`translate(${x} ${y})`} fill={ICON[k].c} fillRule="evenodd" />
        </g>
      ))}
      <g transform={tf("D")}>
        <rect x="584" y="205" width="56" height="44" rx="4" fill="#f23b3f" />
        <path d="M588 220H636M588 233H636M600 211L624 220 600 233 624 243" fill="none" stroke="#fff" strokeWidth="4.5" />
        <rect x="1467" y="178" width="12" height="40" fill="#46508c" />
      </g>
      <g transform={tf("E")}>
        <ellipse cx="1315" cy="166" rx="34" ry="15" fill="#55704d" opacity=".25" />
        <path d="M1315 168C1305 146 1266 116 1266 86a49 49 0 0 1 98 0C1364 116 1325 146 1315 168Z" fill="#3fb1ce" stroke="#339bb6" strokeWidth="3" />
        <circle cx="1315" cy="87" r="21" fill="#fff" />
        <circle cx="146" cy="733" r="40" fill="#959595" />
        <circle cx="146" cy="733" r="32" fill="#959595" stroke="#fff" strokeWidth="8" />
        <path d="M127 751C121 725 128 705 150 705A22 22 0 1 1 150 749C142 752 134 752 127 751Z" fill="#fff" />
        <path d="M150 712l4 11 11 4-11 4-4 11-4-11-11-4 11-4z" fill="#858585" />
        <text x="190" y="748" fontSize="66" fontWeight="700" textLength="238" lengthAdjust="spacingAndGlyphs" fill="#fff" stroke="#959595" strokeWidth="9" className="[paint-order:stroke]">mapbox</text>
      </g>
      <g fontSize="15" fill="#404040">
        <rect x="2143" y="1187" width="346" height="20" fill="#fff" opacity=".5" />
        <text x="2156" y="1206" textLength="66" lengthAdjust="spacingAndGlyphs">© Mapbox</text>
        <text x="2229" y="1206" textLength="124" lengthAdjust="spacingAndGlyphs">© OpenStreetMap</text>
        <text x="2358" y="1206" textLength="123" lengthAdjust="spacingAndGlyphs" fontWeight="700">Improve this map</text>
      </g>
    </svg>
  );
}

const TOILETS = [
  ["Ashton Court Estate Golf Course", "BS41 9JN", "Opened at 8.00am and closed 1 hour before sunset"],
  ["Sea Walls", "BS9 1PG", "Currently CLOSED because of severe weather damage. (Open Monday to Sunday between 08:00-15:30.)"],
  ["Stoke Road", "BS9 1ZZ", "Currently CLOSED due to vandalism. (Open Monday to Sunday between 8.00am and 8.00pm)"],
  ["Ashton Court Estate", "BS41 9JN", "Opened at 8.00am and closed 1 hour before sunset"],
  ["Suspension Bridge", "BS8 3ZZ", "Open Monday to Sunday between 8.00am and 8.00pm"],
  ["Brandon Park", "BS1 5PZ", "8.00 - 15:30 excluding Christmas Day"],
  ["Snuff Mills Park", "BS16 1DL", "Opened at 8.00am and closed 1 hour before sunset"],
  ["Oldbury Court Estate", "BS16 2JH", "Opened at 8.00am and closed 1 hour before sunset"],
];

export default function App() {
  const wide = "h-[50px] border border-[#ccc] bg-black pt-[2px] text-center text-white";
  return (
    <div className="h-[1197px] w-[2496px] overflow-hidden bg-white font-['Verdana','DejaVu_Sans',sans-serif] text-[18.75px] leading-[28px] text-black">
      <h1 className="h-[109px] pt-[6px] font-['Segoe_UI','Open_Sans',sans-serif] text-[44.5px] leading-[66px] tracking-[1.95px] text-[#333]">Caught Short App</h1>
      <div className="flex">
        <aside className="ml-[25px] flex h-[1200px] w-[422px] shrink-0 flex-col gap-[2px] rounded-[12px] border-2 border-black px-[26px] pt-[26px] tracking-[0.12px]">
          <button className="h-[48px] bg-black pt-[2px] text-white">Find Unisex Bathrooms</button>
          <button className="h-[48px] bg-[#ccc] pt-[2px]">Find Baby Changing Facilities</button>
          <button className="h-[48px] bg-black pt-[2px] text-white">Add / Update Your Facilities</button>
        </aside>
        <main className="ml-[50px] h-[1200px] w-[2020px] shrink-0 rounded-[12px] border-2 border-black pl-[25px]">
          <div className="w-[1965px]">
            <label className="block h-[90px] pt-[37px] font-['Segoe_UI','Open_Sans',sans-serif] text-[22px] leading-[34px] tracking-[-0.33px]">Enter Postcode or Provide Geolocation</label>
            <input className="block h-[55px] w-full border-b border-[#ccc] px-[10px] pt-[7px] tracking-[0.1px] placeholder:text-[#757575]" placeholder="Postcode or Location..." />
            <div className="mt-[25px] grid grid-cols-2 gap-[13px]">
              <button className={wide}>Search by Postcode</button>
              <button className={wide}>Use My Geolocation</button>
            </div>
            <button className={`${wide} mt-[13px] w-full`}>List all without providing location</button>
            <table className="w-full table-fixed border-collapse">
              <colgroup>
                <col className="w-[349px]" /><col className="w-[137px]" /><col className="w-[1035px]" /><col className="w-[178px]" /><col />
              </colgroup>
              <thead>
                <tr className="h-[34px] whitespace-nowrap">
                  <th className="pr-[40px] pl-[3px]">Toilet Name</th>
                  <th className="pr-[40px]">Postcode</th>
                  <th className="pr-[40px]">Opening Hours</th>
                  <th className="pr-[40px] text-left">Baby Change</th>
                  <th className="text-left">Unisex</th>
                </tr>
              </thead>
              <tbody>
                {TOILETS.map((r, i) => (
                  <tr key={i} className="h-[32.6px] whitespace-nowrap">
                    <td className="pt-[1px] pl-[3px] tracking-[0.08px]">{r[0]}</td>
                    <td className="pt-[1px] tracking-[0.08px]">{r[1]}</td>
                    <td className={i === 1 || i === 2 || i === 5 ? "pt-[1px] tracking-[0.14px]" : "pt-[1px] tracking-[0.06px]"}>{r[2]}</td>
                    <td className="pt-[1px]">Y</td>
                    <td className="pt-[1px]">Y</td>
                  </tr>
                ))}
              </tbody>
            </table>
            <div className="mt-[25px] h-[560px] overflow-hidden rounded-[12px] border-2 border-black">
              <BristolMap />
            </div>
          </div>
        </main>
      </div>
    </div>
  );
}
